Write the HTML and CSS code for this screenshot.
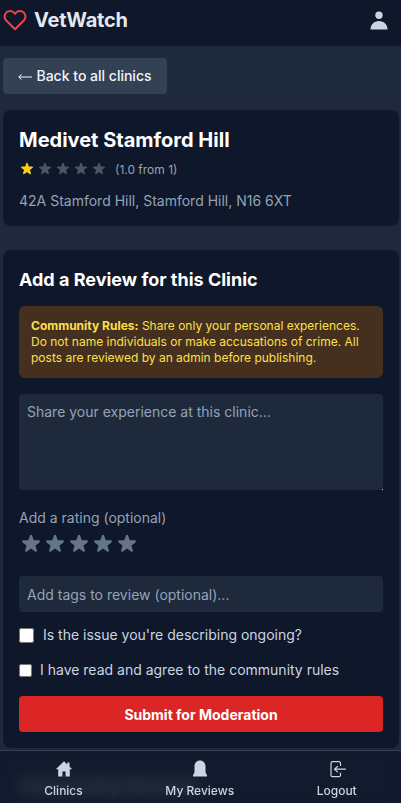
FILE: index.html
```html
<!DOCTYPE html>
<html lang="en">
<head>
<meta charset="utf-8">
<title>VetWatch</title>
<link rel="stylesheet" href="styles.css">
</head>
<body>
<header class="topbar">
  <div class="brand">
    <svg class="brand-heart" viewBox="0 0 24 24" width="24" height="24" fill="none" stroke="#ef4444" stroke-width="2" stroke-linecap="round" stroke-linejoin="round"><path d="M20.84 4.61a5.5 5.5 0 0 0-7.78 0L12 5.67l-1.06-1.06a5.5 5.5 0 0 0-7.78 7.78l1.06 1.06L12 21.23l7.78-7.78 1.06-1.06a5.5 5.5 0 0 0 0-7.78z"/></svg>
    <span class="brand-name">VetWatch</span>
  </div>
  <svg class="user-icon" viewBox="0 0 20 20" width="20" height="20" fill="#cbd5e1"><circle cx="10" cy="5.200" r="3.700"/><path d="M1.500 19.500C1.500 14.500 5.200 11 10 11s8.500 3.500 8.500 8.500z"/></svg>
</header>
<main class="content">
  <button class="back-btn"><svg class="back-arrow" viewBox="0 0 14 8" width="14" height="8" fill="none" stroke="#f1f5f9" stroke-width="1"><path d="M14 4H.8M3.500 1.300.8 4l2.700 2.700"/></svg>Back to all clinics</button>
  <section class="card clinic">
    <h1 class="clinic-name">Medivet Stamford Hill</h1>
    <div class="rating-row">
      <span class="stars">
        <svg class="star star-on" viewBox="0 0 20 20"><use href="#star"/></svg>
        <svg class="star" viewBox="0 0 20 20"><use href="#star"/></svg>
        <svg class="star" viewBox="0 0 20 20"><use href="#star"/></svg>
        <svg class="star" viewBox="0 0 20 20"><use href="#star"/></svg>
        <svg class="star" viewBox="0 0 20 20"><use href="#star"/></svg>
      </span>
      <span class="rating-text">(1.0 from 1)</span>
    </div>
    <p class="address">42A Stamford Hill, Stamford Hill, N16 6XT</p>
  </section>
  <section class="card review">
    <h2 class="review-title">Add a Review for this Clinic</h2>
    <div class="rules"><strong>Community Rules:</strong> Share only your personal experiences. Do not name individuals or make accusations of crime. All posts are reviewed by an admin before publishing.</div>
    <textarea class="field textarea" placeholder="Share your experience at this clinic..."></textarea>
    <div class="rate-label">Add a rating (optional)</div>
    <div class="rate-stars">
      <svg class="big-star" viewBox="0 0 20 20"><use href="#star"/></svg>
      <svg class="big-star" viewBox="0 0 20 20"><use href="#star"/></svg>
      <svg class="big-star" viewBox="0 0 20 20"><use href="#star"/></svg>
      <svg class="big-star" viewBox="0 0 20 20"><use href="#star"/></svg>
      <svg class="big-star" viewBox="0 0 20 20"><use href="#star"/></svg>
    </div>
    <input class="field tags" type="text" placeholder="Add tags to review (optional)...">
    <label class="check check-big"><input type="checkbox"><span>Is the issue you're describing ongoing?</span></label>
    <label class="check check-small"><input type="checkbox"><span>I have read and agree to the community rules</span></label>
    <button class="submit">Submit for Moderation</button>
  </section>
  <h2 class="community">Community Reviews</h2>
</main>
<nav class="bottom-nav">
  <a class="nav-item">
    <svg viewBox="0 0 20 20" width="20" height="20" fill="#cbd5e1"><path d="M10 2.300 1.800 10.200h2.400V17.500h4.200v-5h3.200v5h4.200V10.200h2.400L15.500 7.600V3.500h-2.300v1.900z"/></svg>
    <span>Clinics</span>
  </a>
  <a class="nav-item">
    <svg viewBox="0 0 20 20" width="20" height="20" fill="#cbd5e1"><path d="M10 1.500c-3.300 0-5.500 2.600-5.500 6v5c0 1.500-.8 2.500-1.500 3.500v1.500h14V16c-.7-1-1.500-2-1.500-3.500v-5c0-3.400-2.200-6-5.500-6z"/></svg>
    <span>My Reviews</span>
  </a>
  <a class="nav-item">
    <svg viewBox="0 0 20 20" width="20" height="20" fill="none" stroke="#cbd5e1" stroke-width="1.200" stroke-linecap="round" stroke-linejoin="round"><path d="M13.500 6.500V4.200A1.500 1.500 0 0 0 12 2.700H5.500A1.500 1.500 0 0 0 4 4.200v12a1.500 1.500 0 0 0 1.500 1.500H12a1.500 1.500 0 0 0 1.500-1.500V14"/><path d="M18.500 10.200H7.500M10.500 7.500 7.500 10.200l3 2.700"/></svg>
    <span>Logout</span>
  </a>
</nav>
<svg class="defs" width="0" height="0"><defs><symbol id="star" viewBox="0 0 20 20"><path d="M9.050 2.930c.3-.92 1.600-.92 1.900 0l1.070 3.290a1 1 0 0 0 .95.690h3.460c.97 0 1.370 1.240.59 1.810l-2.800 2.030a1 1 0 0 0-.36 1.120l1.070 3.290c.3.920-.76 1.690-1.540 1.120l-2.800-2.030a1 1 0 0 0-1.180 0l-2.800 2.030c-.78.570-1.840-.2-1.540-1.120l1.070-3.290a1 1 0 0 0-.36-1.120l-2.800-2.030c-.78-.57-.38-1.810.59-1.810h3.460a1 1 0 0 0 .95-.69z"/></symbol></defs></svg>
</body>
</html>
```

FILE: styles.css
```css
* { box-sizing: border-box; }
html, body { margin: 0; padding: 0; height: 803px; overflow: hidden; }
body { background: #1e293b; font-family: Inter, "Liberation Sans", sans-serif; color: #e2e8f0; }
.topbar { height: 46px; background: #0f172a; display: flex; align-items: center; justify-content: space-between; padding: 0 12px 6px 3px; }
.brand { display: flex; align-items: center; gap: 7px; }
.brand-heart { display: block; }
.brand-name { font-size: 20px; font-weight: 700; color: #e2e8f0; letter-spacing: -.2px; }
.user-icon { display: block; }
.content { padding: 12px 2px 12px 3px; display: flex; flex-direction: column; align-items: stretch; }
.back-btn { align-self: flex-start; width: 164px; height: 36px; background: #334155; color: #f1f5f9; border: 0; border-radius: 4px; font: 500 14px/20px Inter, sans-serif; padding: 0 0 1px; display: flex; align-items: center; justify-content: center; gap: 4px; }
.back-arrow { display: block; flex: none; margin-top: 2px; }
.card { background: #0f172a; border-radius: 8px; padding: 16px; }
.clinic { margin-top: 16px; height: 116px; }
.clinic-name { margin: 0; font-size: 20px; line-height: 28px; font-weight: 700; color: #fff; }
.rating-row { display: flex; align-items: center; margin-top: 5px; height: 20px; }
.stars { display: flex; gap: 2px; }
.star { width: 16px; height: 16px; fill: #4b5563; display: block; }
.star-on { fill: #facc15; }
.rating-text { margin-left: 8px; font-size: 12px; color: #94a3b8; }
.address { margin: 12px 0 0; font-size: 14px; line-height: 20px; color: #94a3b8; }
.review { margin-top: 24px; height: 498px; }
.review-title { margin: 0; font-size: 18px; line-height: 28px; font-weight: 700; color: #fff; }
.rules { margin-top: 12px; background: #453020; border-radius: 6px; padding: 12px; font-size: 12px; line-height: 16px; color: #fde047; }
.rules strong { font-weight: 700; }
.field { display: block; width: 100%; background: #1e293b; border: 0; border-radius: 4px; color: #e2e8f0; font: 400 14px/20px Inter, sans-serif; padding: 8px; outline: 0; }
.field::placeholder { color: #94a3b8; opacity: 1; }
.textarea { margin-top: 16px; height: 96px; resize: vertical; }
.textarea::-webkit-resizer { background: linear-gradient(#cbd5e1, #cbd5e1) no-repeat right bottom / 1px 1px; }
.rate-label { margin-top: 18px; font-size: 14px; line-height: 20px; color: #94a3b8; }
.rate-stars { display: flex; gap: 0; margin-top: 4px; margin-left: 0; }
.big-star { width: 24px; height: 24px; fill: #64748b; display: block; }
.tags { margin-top: 20px; height: 36px; }
.check { display: flex; align-items: center; font-size: 14px; line-height: 20px; color: #cbd5e1; }
.check input { margin: 0; appearance: auto; }
.check-big { margin-top: 12px; height: 22px; gap: 9px; }
.check-big input { width: 15px; height: 15px; }
.check-small { margin-top: 14px; height: 20px; gap: 8px; }
.check-small input { width: 13px; height: 13px; }
.submit { display: block; width: 100%; height: 36px; margin-top: 16px; background: #dc2626; color: #fff; border: 0; border-radius: 4px; font: 700 14px Inter, sans-serif; }
.community { margin: 24px 0 0 16px; font-size: 18px; line-height: 28px; font-weight: 700; color: #fff; }
.bottom-nav { position: fixed; left: 0; right: 0; bottom: 0; height: 53px; padding: 0 3px; background: rgba(15, 23, 42, .8); backdrop-filter: blur(8px); border-top: 1px solid #334155; display: flex; justify-content: space-around; }
.nav-item { display: flex; flex-direction: column; align-items: center; gap: 4px; padding-top: 8px; font-size: 12px; line-height: 16px; font-weight: 500; color: #cbd5e1; }
.defs { position: absolute; }
```
